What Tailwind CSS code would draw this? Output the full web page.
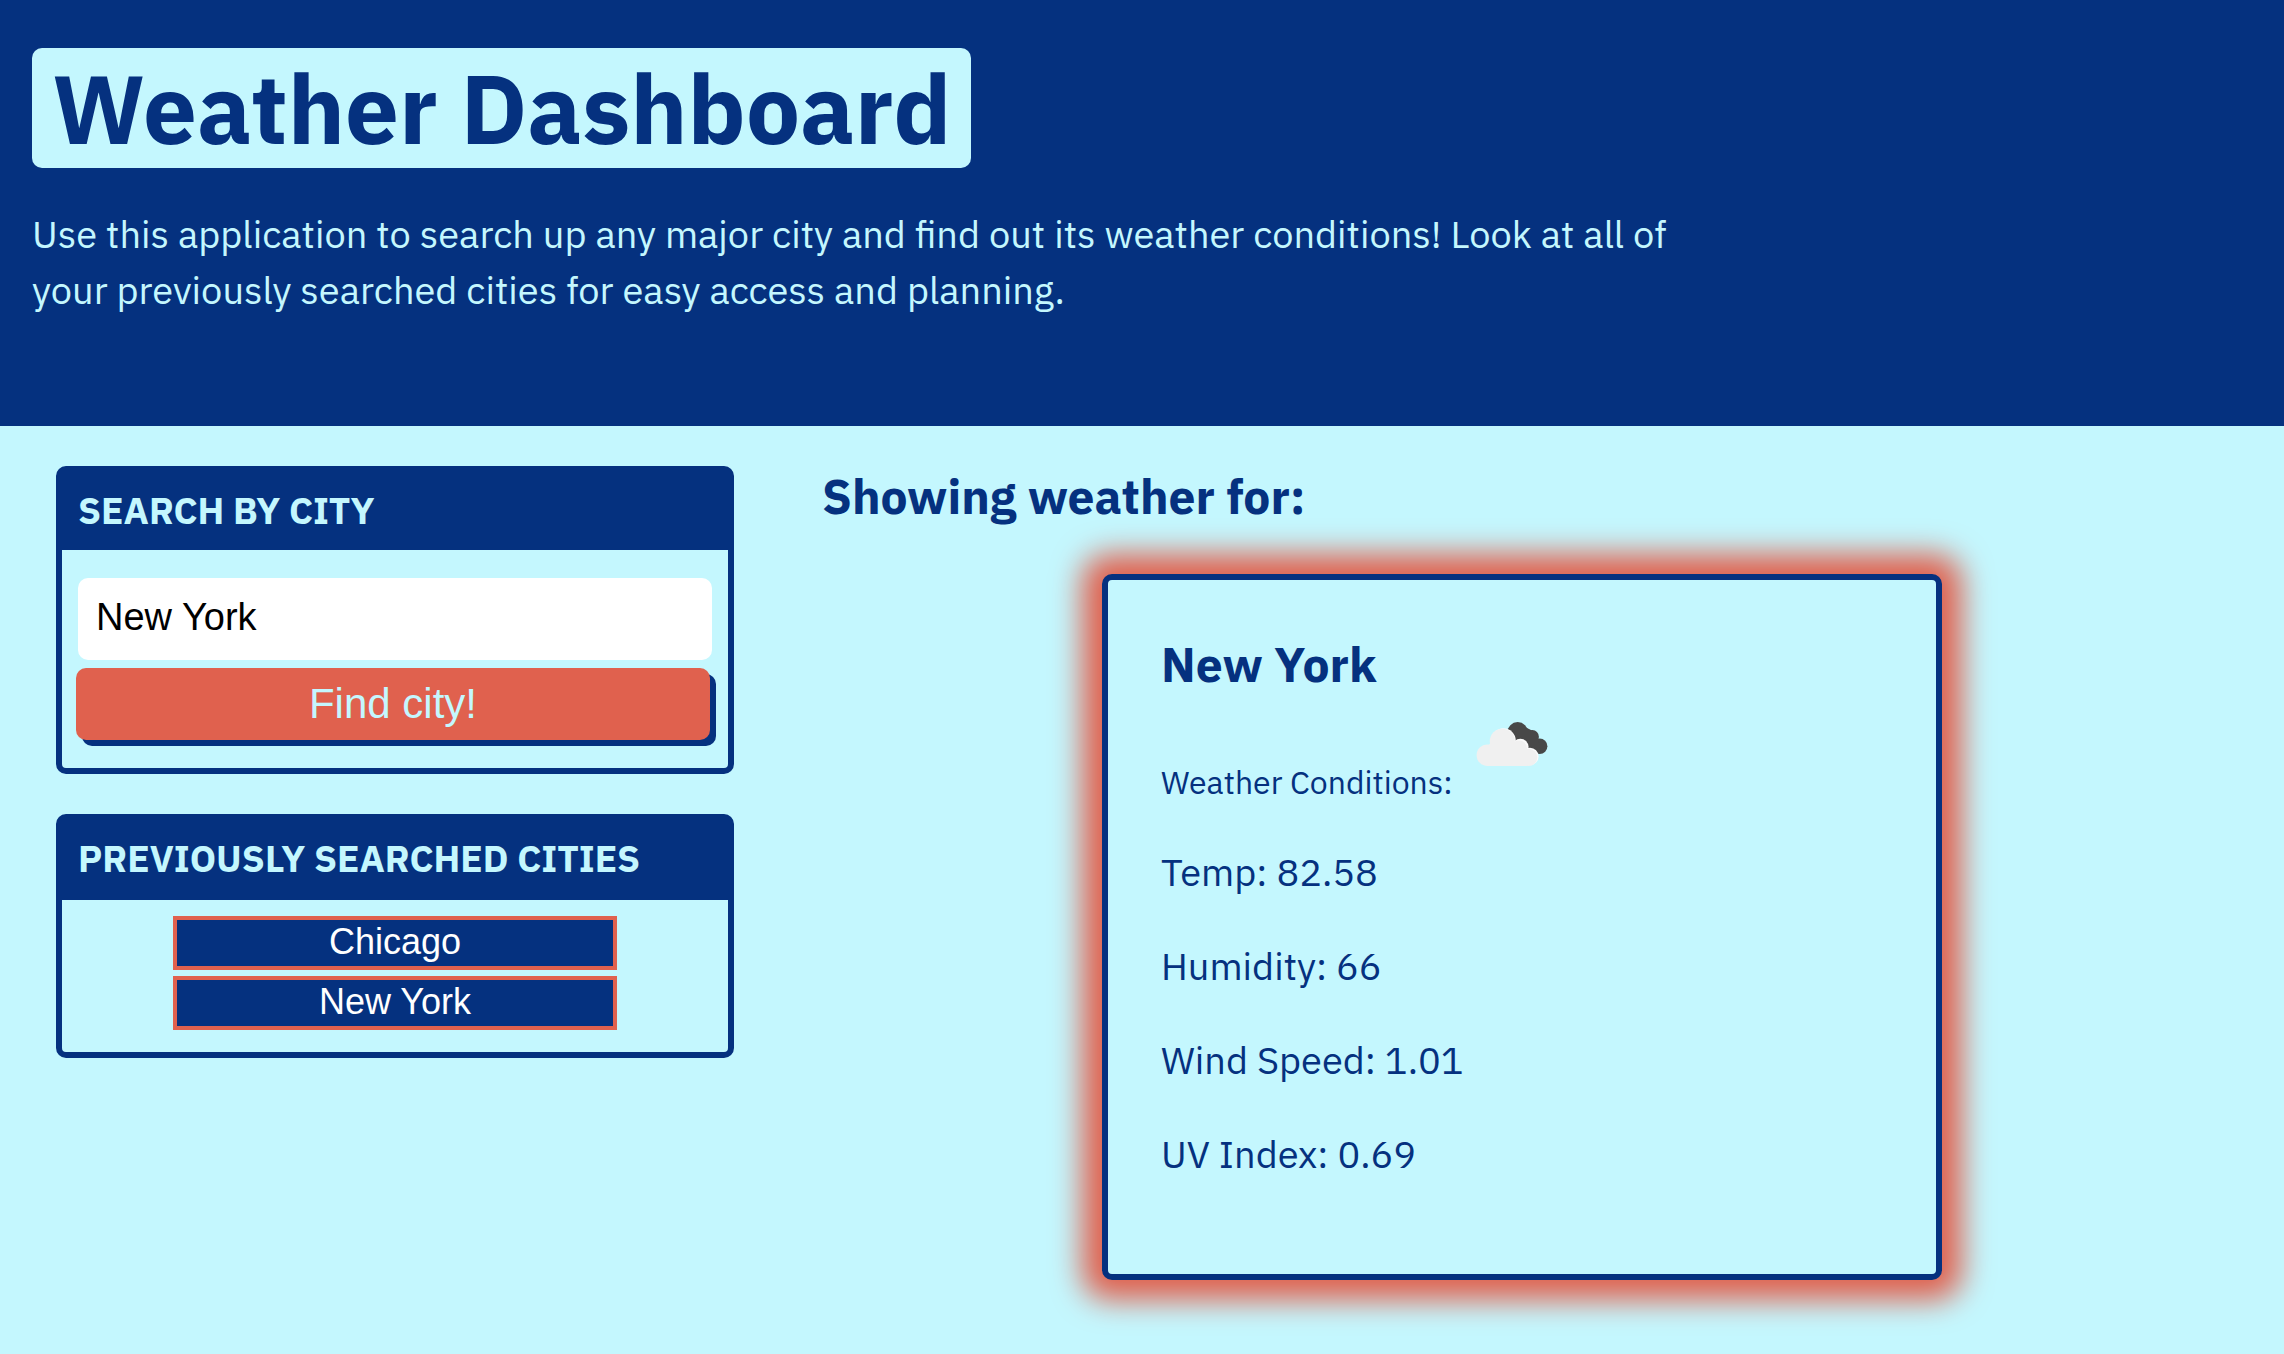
<!DOCTYPE html>
<html lang="en">
<head>
<meta charset="utf-8">
<meta name="viewport" content="width=device-width, initial-scale=1">
<title>Weather Dashboard</title>
<script src="https://cdn.jsdelivr.net/npm/@tailwindcss/browser@4"></script>
</head>
<body class="min-h-screen bg-[#c4f7fe] font-['IBM_Plex_Sans','Liberation_Sans',sans-serif] text-[#05317f]">
  <header class="bg-[#05317f] px-8 pt-12 pb-[108px]">
    <h1 class="w-fit rounded-[10px] bg-[#c4f7fe] px-5 text-[96px] leading-[120px] font-bold">Weather Dashboard</h1>
    <p class="mt-[38px] w-3/4 text-[38px] leading-[56px] text-[#c4f7fe]">Use this application to search up any major city and find out its weather conditions! Look at all of your previously searched cities for easy access and planning.</p>
  </header>

  <main class="grid grid-cols-[31.3%_1fr] items-start gap-[88px] pt-10 pr-[62px] pb-16 pl-14">
    <aside class="flex flex-col gap-10">
      <section class="rounded-[10px] border-6 border-[#05317f]">
        <h2 class="bg-[#05317f] px-4 pt-[14px] pb-4 text-[37px] leading-[48px] font-bold text-[#c4f7fe]"><label for="city">SEARCH BY CITY</label></h2>
        <form class="flex flex-col gap-2 px-4 py-7">
          <input id="city" type="text" value="New York" class="h-[82px] w-full rounded-[10px] bg-white px-[18px] pb-1 font-['Liberation_Sans',Arial,sans-serif] text-[38px] text-black">
          <button type="button" class="mr-0.5 -ml-0.5 h-[72px] rounded-[10px] bg-[#e0614e] pb-0.5 font-['Liberation_Sans',Arial,sans-serif] text-[42px] text-[#c4f7fe] shadow-[6px_6px_0_#05317f]">Find city!</button>
        </form>
      </section>

      <section class="rounded-[10px] border-6 border-[#05317f]">
        <h2 class="bg-[#05317f] px-4 pt-[14px] pb-[18px] text-[37px] leading-[48px] font-bold text-[#c4f7fe]">PREVIOUSLY SEARCHED CITIES</h2>
        <div class="mx-auto flex w-2/3 flex-col gap-1.5 pt-4 pb-[22px] font-['Liberation_Sans',Arial,sans-serif] text-[36px] leading-[44px] text-white">
          <button type="button" class="border-4 border-[#e0614e] bg-[#05317f] pb-0.5">Chicago</button>
          <button type="button" class="border-4 border-[#e0614e] bg-[#05317f] pb-0.5">New York</button>
        </div>
      </section>
    </aside>

    <section>
      <h2 class="text-[48px] leading-[60px] font-bold">Showing weather for:</h2>
      <article class="mx-auto mt-12 w-3/5 rounded-[10px] border-6 border-[#05317f] bg-[#c4f7fe] px-[53px] pt-[54px] pb-[95px] shadow-[0_0_30px_20px_#e0614e]">
        <h3 class="text-[48px] leading-[60px] font-bold">New York</h3>
        <p class="flex items-baseline gap-2 text-[32px] leading-[44px]">Weather Conditions:
          <svg class="size-[100px] shrink-0" viewBox="0 0 100 100" role="img" aria-label="Broken clouds">
            <g fill="#484848">
              <circle cx="56.7" cy="38.5" r="10.4"/>
              <circle cx="71.3" cy="42.7" r="6.6"/>
              <circle cx="78.7" cy="52.3" r="7.7"/>
              <path d="M50 44 60 31 76 39 80 58 70 60Z"/>
            </g>
            <g fill="#fafafa">
              <circle cx="42.5" cy="46.6" r="12.3"/>
              <circle cx="59.4" cy="53" r="8.2"/>
              <circle cx="69" cy="62.4" r="8.6"/>
            </g>
            <g fill="#f0f0f0">
              <circle cx="26.4" cy="61.2" r="10.8"/>
              <circle cx="41.3" cy="47.2" r="12.5"/>
              <circle cx="58" cy="54.4" r="8"/>
              <circle cx="67.6" cy="63.4" r="8.6"/>
              <path d="M26.4 72V53L30 48H54L66 58V72Z"/>
            </g>
          </svg>
        </p>
        <div class="mt-[43px] flex flex-col gap-11 text-[38px] leading-[50px]">
          <p>Temp: 82.58</p>
          <p>Humidity: 66</p>
          <p>Wind Speed: 1.01</p>
          <p>UV Index: 0.69</p>
        </div>
      </article>
    </section>
  </main>
</body>
</html>
